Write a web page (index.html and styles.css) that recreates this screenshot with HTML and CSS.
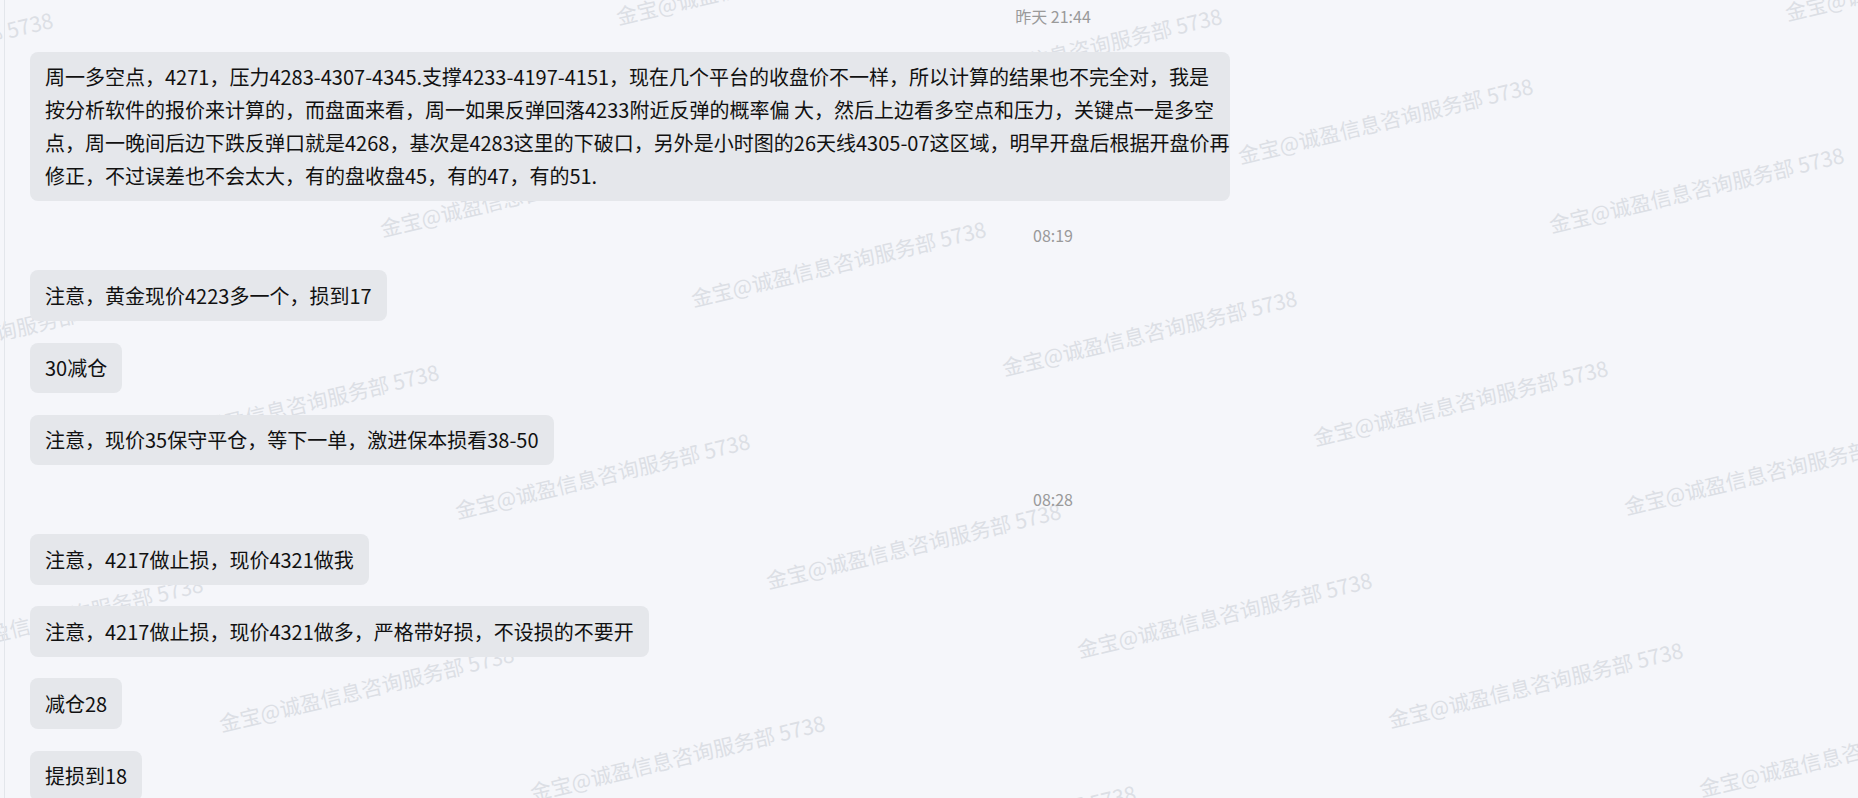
FILE: index.html
```html
<!DOCTYPE html>
<html lang="zh-CN">
<head>
<meta charset="utf-8">
<title>聊天记录</title>
<link rel="stylesheet" href="styles.css">
</head>
<body>
<div class="page">
  <div class="watermarks" aria-hidden="true">
    <span class="wm" style="left:1788px;top:2px">金宝@诚盈信息咨询服务部 5738</span>
    <span class="wm" style="left:619px;top:6px">金宝@诚盈信息咨询服务部 5738</span>
    <span class="wm" style="left:930px;top:75px">金宝@诚盈信息咨询服务部 5738</span>
    <span class="wm" style="left:1241px;top:145px">金宝@诚盈信息咨询服务部 5738</span>
    <span class="wm" style="left:1552px;top:214px">金宝@诚盈信息咨询服务部 5738</span>
    <span class="wm" style="left:-239px;top:79px">金宝@诚盈信息咨询服务部 5738</span>
    <span class="wm" style="left:72px;top:149px">金宝@诚盈信息咨询服务部 5738</span>
    <span class="wm" style="left:383px;top:218px">金宝@诚盈信息咨询服务部 5738</span>
    <span class="wm" style="left:694px;top:288px">金宝@诚盈信息咨询服务部 5738</span>
    <span class="wm" style="left:1005px;top:357px">金宝@诚盈信息咨询服务部 5738</span>
    <span class="wm" style="left:1316px;top:427px">金宝@诚盈信息咨询服务部 5738</span>
    <span class="wm" style="left:1627px;top:496px">金宝@诚盈信息咨询服务部 5738</span>
    <span class="wm" style="left:-164px;top:361px">金宝@诚盈信息咨询服务部 5738</span>
    <span class="wm" style="left:147px;top:431px">金宝@诚盈信息咨询服务部 5738</span>
    <span class="wm" style="left:458px;top:500px">金宝@诚盈信息咨询服务部 5738</span>
    <span class="wm" style="left:769px;top:570px">金宝@诚盈信息咨询服务部 5738</span>
    <span class="wm" style="left:1080px;top:639px">金宝@诚盈信息咨询服务部 5738</span>
    <span class="wm" style="left:1391px;top:709px">金宝@诚盈信息咨询服务部 5738</span>
    <span class="wm" style="left:1702px;top:778px">金宝@诚盈信息咨询服务部 5738</span>
    <span class="wm" style="left:-89px;top:643px">金宝@诚盈信息咨询服务部 5738</span>
    <span class="wm" style="left:222px;top:713px">金宝@诚盈信息咨询服务部 5738</span>
    <span class="wm" style="left:533px;top:782px">金宝@诚盈信息咨询服务部 5738</span>
    <span class="wm" style="left:844px;top:852px">金宝@诚盈信息咨询服务部 5738</span>
  </div>

  <div class="chat">
    <div class="time">昨天 21:44</div>
    <div class="bubble bubble-wide">周一多空点，4271，压力4283-4307-4345.支撑4233-4197-4151，现在几个平台的收盘价不一样，所以计算的结果也不完全对，我是<br>按分析软件的报价来计算的，而盘面来看，周一如果反弹回落4233附近反弹的概率偏 大，然后上边看多空点和压力，关键点一是多空<br>点，周一晚间后边下跌反弹口就是4268，基次是4283这里的下破口，另外是小时图的26天线4305-07这区域，明早开盘后根据开盘价再<br>修正，不过误差也不会太大，有的盘收盘45，有的47，有的51.</div>

    <div class="time">08:19</div>
    <div class="bubble">注意，黄金现价4223多一个，损到17</div>
    <div class="bubble">30减仓</div>
    <div class="bubble">注意，现价35保守平仓，等下一单，激进保本损看38-50</div>

    <div class="time">08:28</div>
    <div class="bubble">注意，4217做止损，现价4321做我</div>
    <div class="bubble">注意，4217做止损，现价4321做多，严格带好损，不设损的不要开</div>
    <div class="bubble">减仓28</div>
    <div class="bubble">提损到18</div>
  </div>
</div>
</body>
</html>
```

FILE: styles.css
```css
* {
  box-sizing: border-box;
}

html, body {
  margin: 0;
  padding: 0;
  height: 100%;
  overflow: hidden;
}

body {
  background: #f5f6fa;
  font-family: "Noto Sans CJK SC", "Noto Sans", sans-serif;
  color: #111;
}

.page {
  position: relative;
  display: flex;
  min-height: 100vh;
  padding-left: 4px;
  overflow: hidden;
}

.watermarks {
  position: absolute;
  inset: 0;
  overflow: hidden;
  z-index: 0;
  pointer-events: none;
}

.wm {
  position: absolute;
  white-space: nowrap;
  font-family: "Noto Sans CJK SC", sans-serif;
  font-size: 21px;
  line-height: 21px;
  color: #dcdfe5;
  transform-origin: 0 100%;
  transform: rotate(-13.5deg);
}

.chat {
  position: relative;
  z-index: 1;
  flex: 1;
  min-width: 0;
  border-left: 1px solid #e3e6eb;
  padding: 4px 0 0 25px;
  display: flex;
  flex-direction: column;
  align-items: flex-start;
  gap: 21.7px;
}

.time {
  align-self: stretch;
  padding-left: 218px;
  text-align: center;
  font-size: 16px;
  line-height: 24px;
  height: 24px;
  margin-bottom: 2px;
  color: #9a9a9a;
}

.bubble {
  max-width: 1200px;
  padding: 8.7px 15px;
  background: #e5e7eb;
  border-radius: 8px;
  font-size: 20px;
  line-height: 33px;
  color: #111;
  white-space: nowrap;
}

.bubble-wide {
  width: 1200px;
}
```
